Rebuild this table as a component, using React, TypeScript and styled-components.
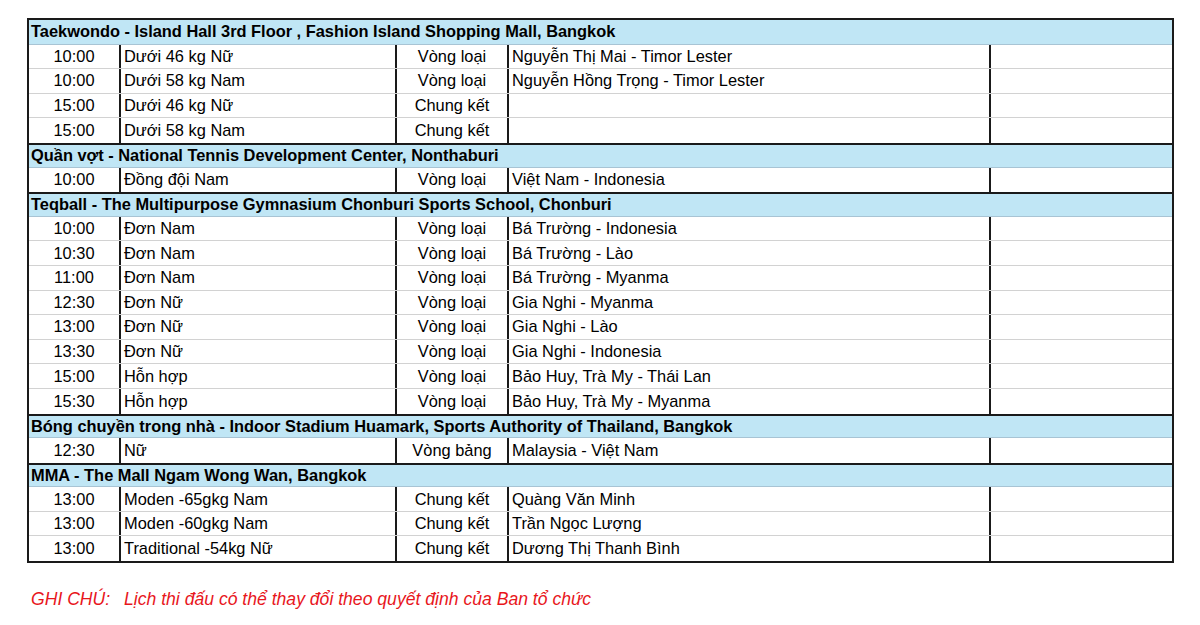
import React from "react";
import styled, { createGlobalStyle } from "styled-components";

const GlobalStyle = createGlobalStyle`
  html, body {
    margin: 0;
    padding: 0;
    background: #fff;
  }
  body {
    font-family: "Liberation Sans", Arial, sans-serif;
    color: #000;
  }
`;

const Page = styled.div`
  padding: 18px 0 0 27px;
  width: 1200px;
  box-sizing: border-box;
`;

const Table = styled.div`
  width: 1147px;
  border: 2px solid #1a1a1a;
  box-sizing: border-box;
`;

const SectionHeader = styled.div<{ $first?: boolean }>`
  height: 24.6px;
  box-sizing: border-box;
  background: #c0e6f5;
  border-top: ${(p) => (p.$first ? "none" : "2px solid #1a1a1a")};
  border-bottom: 1px solid #a8c4d4;
  padding: 0 2px;
  font-size: 16.4px;
  font-weight: 700;
  display: flex;
  align-items: center;
  white-space: nowrap;
`;

const Row = styled.div<{ $last?: boolean }>`
  display: grid;
  grid-template-columns: 92px 276px 112px 482px 1fr;
  height: 24.6px;
  box-sizing: border-box;
  border-bottom: ${(p) => (p.$last ? "none" : "1px solid #d2d2d2")};
`;

const Cell = styled.div<{ $align?: "center" | "left"; $divider?: boolean }>`
  display: flex;
  align-items: center;
  justify-content: ${(p) => (p.$align === "center" ? "center" : "flex-start")};
  padding: ${(p) => (p.$align === "center" ? "0" : "0 3px")};
  border-right: ${(p) => (p.$divider ? "2px solid #1a1a1a" : "none")};
  font-size: 16.4px;
  white-space: nowrap;
  overflow: hidden;
  box-sizing: border-box;
`;

const Note = styled.div`
  display: flex;
  margin-top: 26px;
  padding-left: 4px;
  color: #e8161c;
  font-size: 17.6px;
  font-style: italic;
`;

const NoteLabel = styled.span`
  width: 93px;
`;

type Match = [string, string, string, string];

type Section = {
  title: string;
  matches: Match[];
};

const sections: Section[] = [
  {
    title:
      "Taekwondo - Island Hall 3rd Floor , Fashion Island Shopping Mall, Bangkok",
    matches: [
      ["10:00", "Dưới 46 kg Nữ", "Vòng loại", "Nguyễn Thị Mai - Timor Lester"],
      ["10:00", "Dưới 58 kg Nam", "Vòng loại", "Nguyễn Hồng Trọng - Timor Lester"],
      ["15:00", "Dưới 46 kg Nữ", "Chung kết", ""],
      ["15:00", "Dưới 58 kg Nam", "Chung kết", ""],
    ],
  },
  {
    title: "Quần vợt - National Tennis Development Center, Nonthaburi",
    matches: [["10:00", "Đồng đội Nam", "Vòng loại", "Việt Nam - Indonesia"]],
  },
  {
    title:
      "Teqball - The Multipurpose Gymnasium Chonburi Sports School, Chonburi",
    matches: [
      ["10:00", "Đơn Nam", "Vòng loại", "Bá Trường - Indonesia"],
      ["10:30", "Đơn Nam", "Vòng loại", "Bá Trường - Lào"],
      ["11:00", "Đơn Nam", "Vòng loại", "Bá Trường - Myanma"],
      ["12:30", "Đơn Nữ", "Vòng loại", "Gia Nghi - Myanma"],
      ["13:00", "Đơn Nữ", "Vòng loại", "Gia Nghi - Lào"],
      ["13:30", "Đơn Nữ", "Vòng loại", "Gia Nghi - Indonesia"],
      ["15:00", "Hỗn hợp", "Vòng loại", "Bảo Huy, Trà My - Thái Lan"],
      ["15:30", "Hỗn hợp", "Vòng loại", "Bảo Huy, Trà My - Myanma"],
    ],
  },
  {
    title:
      "Bóng chuyền trong nhà - Indoor Stadium Huamark, Sports Authority of Thailand, Bangkok",
    matches: [["12:30", "Nữ", "Vòng bảng", "Malaysia - Việt Nam"]],
  },
  {
    title: "MMA - The Mall Ngam Wong Wan, Bangkok",
    matches: [
      ["13:00", "Moden -65gkg Nam", "Chung kết", "Quàng Văn Minh"],
      ["13:00", "Moden -60gkg Nam", "Chung kết", "Trần Ngọc Lượng"],
      ["13:00", "Traditional -54kg Nữ", "Chung kết", "Dương Thị Thanh Bình"],
    ],
  },
];

const App: React.FC = () => {
  return (
    <Page>
      <GlobalStyle />
      <Table>
        {sections.map((section, si) => (
          <React.Fragment key={section.title}>
            <SectionHeader $first={si === 0}>{section.title}</SectionHeader>
            {section.matches.map((m, mi) => (
              <Row key={mi} $last={mi === section.matches.length - 1}>
                <Cell $align="center" $divider>
                  {m[0]}
                </Cell>
                <Cell $divider>{m[1]}</Cell>
                <Cell $align="center" $divider>
                  {m[2]}
                </Cell>
                <Cell $divider>{m[3]}</Cell>
                <Cell />
              </Row>
            ))}
          </React.Fragment>
        ))}
      </Table>
      <Note>
        <NoteLabel>GHI CHÚ:</NoteLabel>
        <span>Lịch thi đấu có thể thay đổi theo quyết định của Ban tổ chức</span>
      </Note>
    </Page>
  );
};

export default App;
